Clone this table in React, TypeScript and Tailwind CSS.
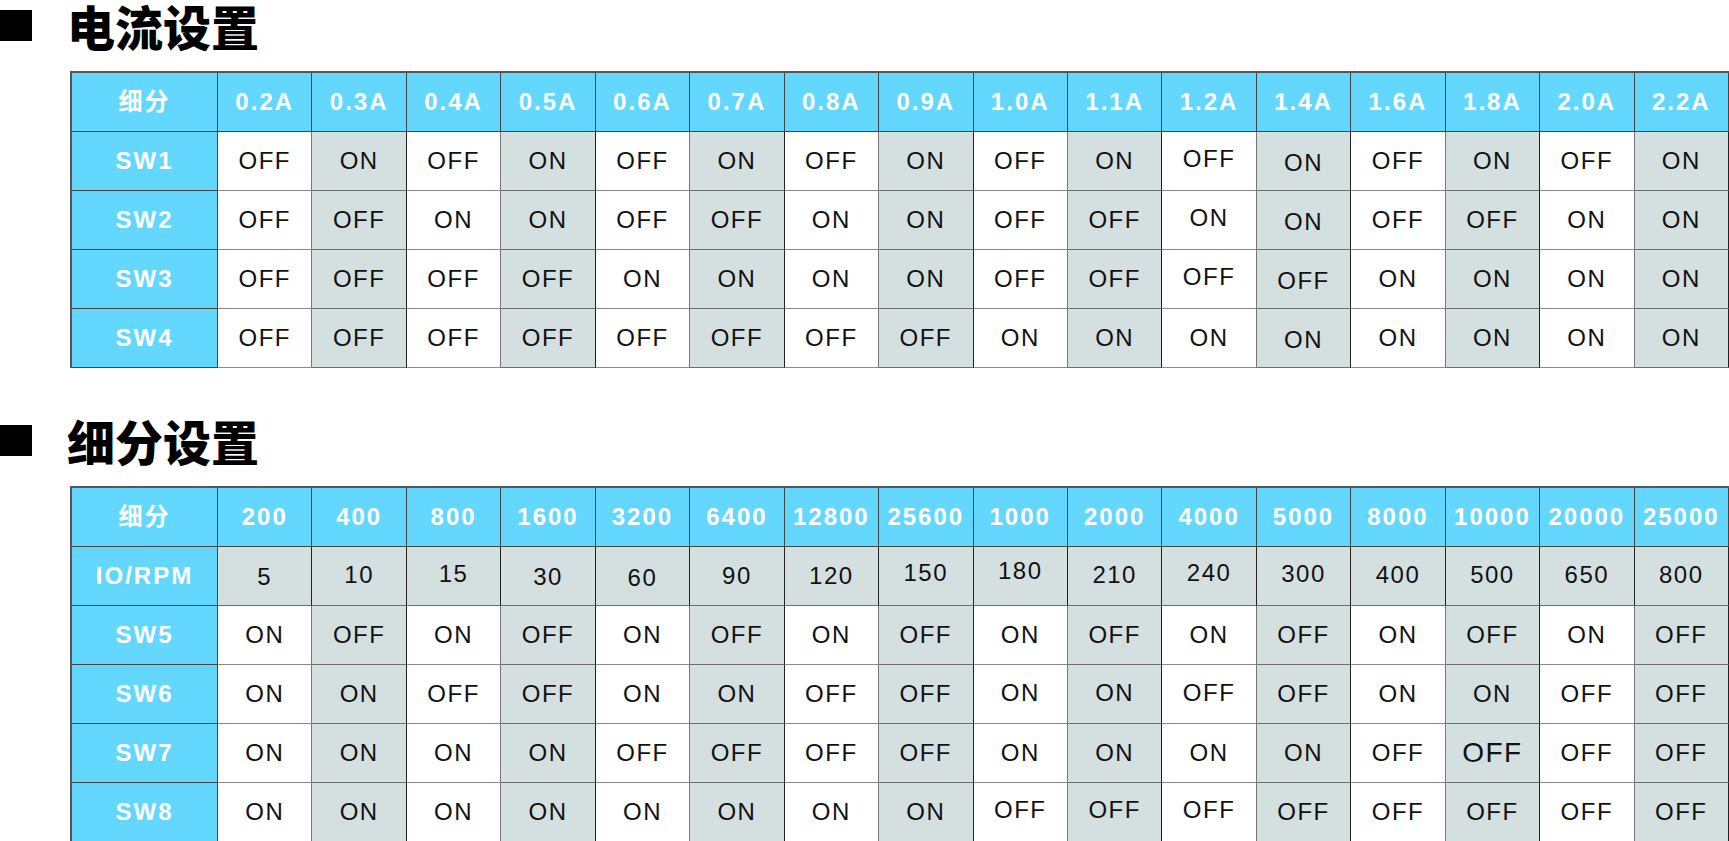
import React from "react";

const latin = "font-['Liberation_Sans','Noto_Sans_CJK_SC',sans-serif]";

type Table = {
  head: string[];
  rows: { label: string; cells: string[]; allGrey?: boolean; shift?: number[] }[];
};

const onoff = (pattern: number[]) => pattern.map((v) => (v ? "ON" : "OFF"));
const rep = (unit: number[], times: number) => Array.from({ length: times }).flatMap(() => unit);

const current: Table = {
  head: ["0.2A", "0.3A", "0.4A", "0.5A", "0.6A", "0.7A", "0.8A", "0.9A", "1.0A", "1.1A", "1.2A", "1.4A", "1.6A", "1.8A", "2.0A", "2.2A"],
  rows: [
    { label: "SW1", cells: onoff(rep([0, 1], 8)), shift: [0, 0, 0, 0, 0, 0, 0, 0, 0, 0, -2, 2, 0, 0, 0, 0] },
    { label: "SW2", cells: onoff(rep([0, 0, 1, 1], 4)), shift: [0, 0, 0, 0, 0, 0, 0, 0, 0, 0, -2, 2, 0, 0, 0, 0] },
    { label: "SW3", cells: onoff(rep([0, 0, 0, 0, 1, 1, 1, 1], 2)), shift: [0, 0, 0, 0, 0, 0, 0, 0, 0, 0, -2, 2, 0, 0, 0, 0] },
    { label: "SW4", cells: onoff(rep([0, 0, 0, 0, 0, 0, 0, 0, 1, 1, 1, 1, 1, 1, 1, 1], 1)), shift: [0, 0, 0, 0, 0, 0, 0, 0, 0, 0, 0, 2, 0, 0, 0, 0] },
  ],
};

const micro: Table = {
  head: ["200", "400", "800", "1600", "3200", "6400", "12800", "25600", "1000", "2000", "4000", "5000", "8000", "10000", "20000", "25000"],
  rows: [
    {
      label: "IO/RPM",
      allGrey: true,
      cells: ["5", "10", "15", "30", "60", "90", "120", "150", "180", "210", "240", "300", "400", "500", "650", "800"],
      shift: [1, -1, -2, 1, 2, 0, 0, -3, -5, -1, -3, -2, -1, -1, -1, -1],
    },
    { label: "SW5", cells: onoff(rep([1, 0], 8)) },
    { label: "SW6", cells: onoff(rep([1, 1, 0, 0], 4)), shift: [0, 0, 0, 0, 0, 0, 0, 0, -1, -1, -1, 0, 0, 0, 0, 0] },
    { label: "SW7", cells: onoff(rep([1, 1, 1, 1, 0, 0, 0, 0], 2)) },
    { label: "SW8", cells: onoff(rep([1, 1, 1, 1, 1, 1, 1, 1, 0, 0, 0, 0, 0, 0, 0, 0], 1)), shift: [0, 0, 0, 0, 0, 0, 0, 0, -2, -2, -2, 0, 0, 0, 0, 0] },
  ],
};

function Title({ text }: { text: string }) {
  return (
    <div className="flex h-[48px] items-center">
      <div className="h-[31px] w-[32px] bg-black" />
      <h2 className="ml-[35px] font-['Noto_Sans_CJK_SC',sans-serif] text-[48px] font-black leading-[48px] text-black">
        {text}
      </h2>
    </div>
  );
}

const headCell =
  "flex h-[59px] items-center justify-center border-b border-r border-[#444] bg-[#63d7fd] text-[24px] font-bold tracking-[2px] text-white";

function SettingsTable({ data }: { data: Table }) {
  return (
    <div className={`ml-[70px] mt-[22px] grid grid-cols-[146px_repeat(16,1fr)] border-l-2 border-t-2 border-[#555] ${latin}`}>
      <div className={headCell}>细分</div>
      {data.head.map((h) => (
        <div key={h} className={headCell}>
          {h}
        </div>
      ))}
      {data.rows.map((row) => (
        <React.Fragment key={row.label}>
          <div className={headCell}>{row.label}</div>
          {row.cells.map((c, i) => {
            const grey = row.allGrey || i % 2 === 1;
            const big = row.label === "SW7" && i === 13;
            return (
              <div
                key={i}
                className={`flex h-[59px] items-center justify-center border-b border-r ${
                  grey ? "border-b-[#6f6f6f] border-r-[#222] bg-[#d4e0e0]" : "border-b-[#8a8a8a] border-r-[#777] bg-white"
                } ${big ? "text-[28px]" : "text-[24px]"} tracking-[1.5px] text-[#111]`}
              >
                <span style={{ transform: `translateY(${row.shift ? row.shift[i] : 0}px)` }}>{c}</span>
              </div>
            );
          })}
        </React.Fragment>
      ))}
    </div>
  );
}

export default function App() {
  return (
    <main className="min-h-screen w-[1729px] bg-white pt-[1px]">
      <section>
        <Title text="电流设置" />
        <SettingsTable data={current} />
      </section>
      <section className="mt-[48px]">
        <Title text="细分设置" />
        <SettingsTable data={micro} />
      </section>
    </main>
  );
}
